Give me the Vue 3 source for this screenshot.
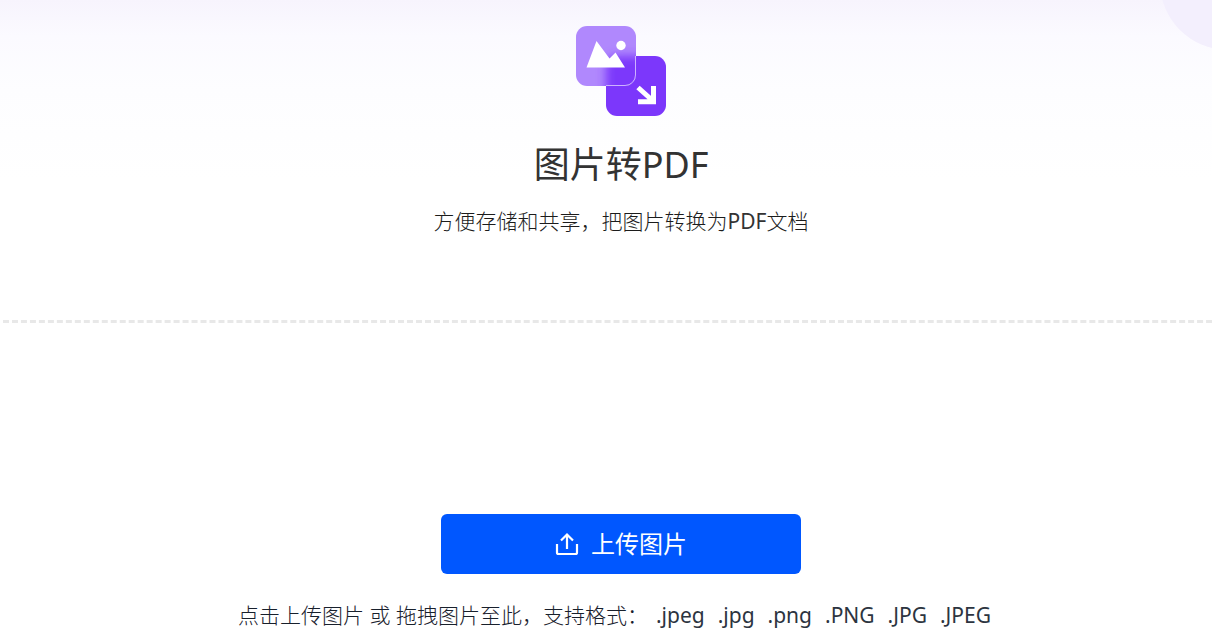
<script setup>
const formats = ['.jpeg', '.jpg', '.png', '.PNG', '.JPG', '.JPEG']
</script>

<template>
  <div class="viewport">
    <main class="page">
      <div class="bubble" aria-hidden="true"></div>
      <header class="intro">
        <svg class="logo" width="90" height="90" viewBox="0 0 90 90" aria-hidden="true">
          <defs>
            <clipPath id="card"><rect width="60" height="60" rx="11" /></clipPath>
            <filter id="soft" x="-30%" y="-30%" width="160%" height="160%"><feGaussianBlur stdDeviation="5" /></filter>
          </defs>
          <rect x="30" y="30" width="60" height="60" rx="11" fill="#7c37fb" />
          <rect width="60" height="60" rx="11" fill="#b088fd" />
          <g clip-path="url(#card)">
            <rect x="30" y="30" width="60" height="60" rx="11" fill="#7c37fb" filter="url(#soft)" />
          </g>
          <path d="M59.5 30V49a10.5 10.5 0 0 1-10.5 10.5H30" fill="none" stroke="#cdb2ff" stroke-width="1" />
          <path d="M10.500 41.500L20.500 15L33.500 32.500L39.500 26.500L49 41.500Z" fill="#fff" />
          <circle cx="45" cy="19.500" r="4.700" fill="#fff" />
          <path d="M62 61.500L76 74M62 75.700H77.500V60" fill="none" stroke="#fff" stroke-width="5" />
        </svg>
        <h1>图片转PDF</h1>
        <p>方便存储和共享，把图片转换为<span class="latin">PDF</span>文档</p>
      </header>
      <section class="drop">
        <button type="button" class="upload">
          <svg width="24" height="24" viewBox="0 0 24 24" fill="none" stroke="#fff" stroke-width="2.200" aria-hidden="true">
            <path d="M2 12V20.500Q2 22 3.500 22H20.500Q22 22 22 20.500V12" />
            <path d="M12 17V2.500M6 8.500L12 2.500L18 8.500" />
          </svg>
          <span>上传图片</span>
        </button>
        <p class="hint">
          点击上传图片 或 拖拽图片至此，支持格式：<span class="formats"><span v-for="format in formats" :key="format" class="format">{{ format }}</span></span>
        </p>
      </section>
    </main>
  </div>
</template>

<style>
body {
  margin: 0;
  background: #fff;
}
</style>

<style scoped>
.viewport {
  overflow: hidden;
  min-height: 100vh;
}
.page {
  position: relative;
  box-sizing: border-box;
  width: calc(100% + 30px);
  padding: 0 3px;
  background: linear-gradient(#f7f4fd 0, #fbfaff 36px, #fdfdff 90px, #fff 180px);
  color: #333;
  font-family: "Noto Sans", "Noto Sans CJK SC", sans-serif;
}
.bubble {
  position: absolute;
  top: -86px;
  right: -54px;
  width: 136px;
  height: 136px;
  border-radius: 50%;
  background: #f3effd;
}
.intro {
  display: flex;
  flex-direction: column;
  align-items: center;
  height: 320px;
  box-sizing: border-box;
  padding-top: 26px;
}
.logo {
  flex: none;
}
h1 {
  margin: 22px 0 0;
  font-size: 36px;
  line-height: 54px;
  font-weight: 400;
}
.intro p {
  margin: 14px 0 0;
  color: #1c1c1c;
  font-size: 21px;
  line-height: 30px;
  font-weight: 300;
}
.intro .latin {
  color: #333;
  font-weight: 400;
}
.drop {
  display: flex;
  flex-direction: column;
  align-items: center;
  padding: 191px 0 10px;
  border-top: 3px dashed #e8e8e8;
}
.upload {
  display: flex;
  align-items: center;
  justify-content: center;
  gap: 12px;
  width: 360px;
  height: 60px;
  border: 0;
  border-radius: 6px;
  background: #0057ff;
  color: #fff;
  font: 400 24px/36px "Noto Sans", "Noto Sans CJK SC", sans-serif;
  cursor: pointer;
}
.hint {
  margin: 26px 0 0;
  color: #18202c;
  font-size: 21px;
  line-height: 30px;
  font-weight: 300;
  white-space: nowrap;
}
.formats {
  margin-left: 8px;
  color: #2c3440;
  font-weight: 400;
}
.format {
  margin-right: 13px;
}
</style>
